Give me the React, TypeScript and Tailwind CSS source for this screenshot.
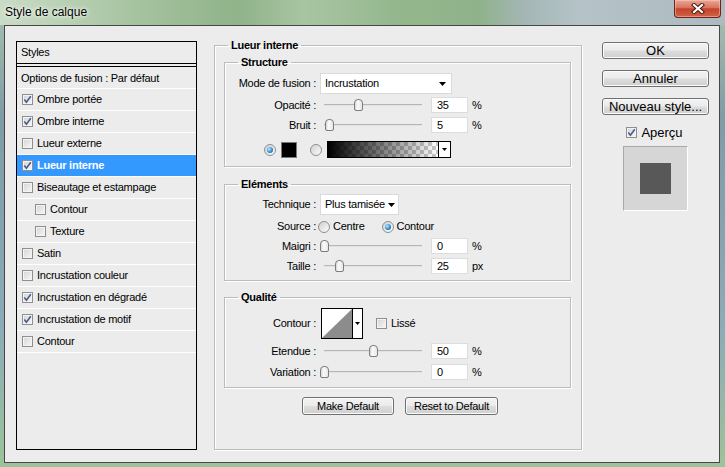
import type { ReactNode } from "react";

const STYLE_ROWS = [
  { label: "Ombre portée", on: true },
  { label: "Ombre interne", on: true },
  { label: "Lueur externe" },
  { label: "Lueur interne", on: true, active: true },
  { label: "Biseautage et estampage" },
  { label: "Contour", sub: true },
  { label: "Texture", sub: true },
  { label: "Satin" },
  { label: "Incrustation couleur" },
  { label: "Incrustation en dégradé", on: true },
  { label: "Incrustation de motif", on: true },
  { label: "Contour" },
];

function Check({ on }: { on?: boolean }) {
  return (
    <span className="flex h-[11px] w-[11px] shrink-0 items-center justify-center border border-[#8e8f8f] bg-[linear-gradient(135deg,#d4d4d4,#f7f7f7)] shadow-[inset_0_0_0_1px_#f4f4f4]">
      {on && (
        <svg width="9" height="9" viewBox="0 0 9 9">
          <path d="M1.3 4.6 L3.4 7.2 L7.8 1.3" fill="none" stroke="#4a5a8e" strokeWidth="1.6" />
        </svg>
      )}
    </span>
  );
}

function Radio({ on }: { on?: boolean }) {
  return (
    <span className="flex h-[12px] w-[12px] shrink-0 items-center justify-center rounded-full border border-[#8e8f8f] bg-[linear-gradient(135deg,#cfcfcf,#fdfdfd)]">
      {on && (
        <span className="h-[6px] w-[6px] rounded-full bg-[radial-gradient(circle_at_35%_35%,#bfeaff,#2e8fd6_55%,#0c4a84)]" />
      )}
    </span>
  );
}

function Arrow() {
  return (
    <svg width="7" height="4" viewBox="0 0 7 4" className="shrink-0">
      <path d="M0 0 H7 L3.5 4 Z" fill="#000" />
    </svg>
  );
}

function Select({ value, width }: { value: string; width: string }) {
  return (
    <div className={`flex h-[21px] items-center justify-between gap-[3px] whitespace-nowrap border border-[#dadada] bg-white pl-[4px] pr-[5px] ${width}`}>
      <span>{value}</span>
      <Arrow />
    </div>
  );
}

function Field({ label, children }: { label: string; children: ReactNode }) {
  return (
    <div className="flex items-center">
      <span className="w-[91px] shrink-0 text-right">{label}</span>
      <div className="ml-[4px] flex items-center">{children}</div>
    </div>
  );
}

function SliderField({ label, value, pos, unit = "%" }: { label: string; value: string; pos: number; unit?: string }) {
  return (
    <Field label={label}>
      <div className="relative h-[16px] w-[106px]">
        <div className="absolute left-[4px] right-[4px] top-[7px] h-[2px] border-t border-[#b6b6b6] bg-[#e2e2e2]" />
        <div
          className="absolute top-[2px] h-[12px] w-[9px] rounded-t-[4px] rounded-b-[2px] border border-[#7d7d7d] bg-[linear-gradient(90deg,#d9d9d9,#fbfbfb_40%,#e6e6e6)]"
          style={{ left: `${pos}px` }}
        />
      </div>
      <div className="ml-[5px] flex h-[16px] w-[37px] items-center border border-[#dcdcdc] bg-white pl-[5px]">{value}</div>
      <span className="ml-[4px]">{unit}</span>
    </Field>
  );
}

function Group({ title, className = "", children }: { title: string; className?: string; children: ReactNode }) {
  return (
    <fieldset className={`w-[347px] border border-[#bcbcbc] p-0 shadow-[inset_1px_1px_0_#fff,1px_1px_0_#fff] ${className}`}>
      <legend className="ml-[13px] px-[3px] font-bold leading-[13px]">{title}</legend>
      {children}
    </fieldset>
  );
}

function Button({ label, className = "" }: { label: string; className?: string }) {
  return (
    <div
      className={`flex items-center justify-center whitespace-nowrap rounded-[3px] border border-[#707070] bg-[linear-gradient(180deg,#f3f3f3_0%,#ebebeb_48%,#dddddd_52%,#cfcfcf_100%)] shadow-[inset_0_0_0_1px_#fbfbfb] ${className}`}
    >
      {label}
    </div>
  );
}

export default function App() {
  return (
    <div className="h-[467px] w-[725px] overflow-hidden bg-[linear-gradient(180deg,#a9c3ad_0%,#7f9ca6_25%,#8cabb8_70%,#9cc398_100%)] font-[family-name:'Liberation_Sans',Arial,sans-serif] text-[11px] leading-[13px] tracking-[-0.25px] text-black">
      {/* aero title bar */}
      <div className="flex h-[25px] items-start justify-between bg-[linear-gradient(90deg,#cadcc6_0%,#b6cfb1_10%,#a0bf9a_22%,#90b38a_33%,#a8c5a2_42%,#94b78e_55%,#8fb28a_66%,#a3b6b3_72%,#b5c3c8_80%,#adbbc1_100%)] pl-[5px] pr-[4px]">
        <span className="mt-[6px] text-[12px] tracking-normal [text-shadow:0_0_6px_#fff,0_0_3px_#fff]">Style de calque</span>
        <div className="flex h-[18px] w-[47px] items-center justify-center rounded-b-[4px] border border-t-0 border-[#6a241a] bg-[linear-gradient(180deg,#eaa898_0%,#d8735d_45%,#c5422a_52%,#cf6446_100%)] shadow-[inset_0_0_0_1px_rgba(255,215,205,0.45)]">
          <svg width="14" height="11" viewBox="0 0 14 11">
            <path d="M3 2 L11 9 M11 2 L3 9" stroke="#4a1a12" strokeWidth="4.2" strokeLinecap="square" />
            <path d="M3 2 L11 9 M11 2 L3 9" stroke="#fff" strokeWidth="2.2" strokeLinecap="square" />
          </svg>
        </div>
      </div>

      <div className="ml-[4px] flex h-[438px] w-[716px] items-start border border-[#474747] bg-[#ececec] pl-[11px]">
        {/* styles list */}
        <div className="mt-[15px] h-[409px] w-[181px] shrink-0 border border-black">
          <div className="flex h-[22px] items-center border-b border-black pl-[4px]">Styles</div>
          <div className="mt-[2px] flex h-[22px] items-center border-t border-black pl-[4px]">
            <span className="pt-[1px]">Options de fusion : Par défaut</span>
          </div>
          <div className="border-t border-white" />
          {STYLE_ROWS.map((row, i) => (
            <div
              key={i}
              className={`flex h-[22px] items-center border-b border-white ${row.sub ? "pl-[18px]" : "pl-[5px]"} ${
                row.active ? "bg-[#3399ff] font-bold text-white" : ""
              }`}
            >
              <Check on={row.on} />
              <span className="ml-[4px]">{row.label}</span>
            </div>
          ))}
        </div>

        {/* settings */}
        <fieldset className="ml-[17px] mt-[13px] h-[411px] w-[368px] shrink-0 border border-[#bcbcbc] p-0 shadow-[inset_1px_1px_0_#fff,1px_1px_0_#fff]">
          <legend className="ml-[13px] px-[3px] font-bold leading-[13px]">Lueur interne</legend>
          <div className="flex flex-col pl-[9px] pt-[4px]">
            <Group title="Structure">
              <div className="flex flex-col pb-[8px] pt-[4px]">
                <Field label="Mode de fusion :">
                  <Select value="Incrustation" width="w-[132px]" />
                </Field>
                <div className="mt-[3px]">
                  <SliderField label="Opacité :" value="35" pos={34} />
                </div>
                <div className="mt-[4px]">
                  <SliderField label="Bruit :" value="5" pos={5} />
                </div>
                <div className="mt-[8px] flex h-[17px] items-center pl-[39px]">
                  <Radio on />
                  <span className="ml-[5px] h-[16px] w-[16px] border border-[#7a7a7a] bg-black" />
                  <span className="ml-[13px]">
                    <Radio />
                  </span>
                  <div className="ml-[5px] flex h-[17px] w-[124px] border border-black bg-white">
                    <div className="h-full flex-1 border-r border-black bg-[image:linear-gradient(90deg,#000,rgba(0,0,0,0)),repeating-conic-gradient(#c9c9c9_0%_25%,#ffffff_0%_50%)] bg-[length:100%_100%,8px_8px]" />
                    <div className="flex w-[11px] items-center justify-center">
                      <svg width="5" height="3" viewBox="0 0 5 3">
                        <path d="M0 0 H5 L2.5 3 Z" fill="#000" />
                      </svg>
                    </div>
                  </div>
                </div>
              </div>
            </Group>

            <Group title="Eléments" className="mt-[11px]">
              <div className="flex flex-col pb-[6px] pt-[3px]">
                <Field label="Technique :">
                  <Select value="Plus tamisée" width="w-[79px]" />
                </Field>
                <div className="mt-[5px] flex h-[13px] items-center">
                  <span className="w-[91px] shrink-0 text-right">Source :</span>
                  <span className="ml-[2px]">
                    <Radio />
                  </span>
                  <span className="ml-[3px]">Centre</span>
                  <span className="ml-[17px]">
                    <Radio on />
                  </span>
                  <span className="ml-[3px]">Contour</span>
                </div>
                <div className="mt-[5px]">
                  <SliderField label="Maigri :" value="0" pos={0} />
                </div>
                <div className="mt-[4px]">
                  <SliderField label="Taille :" value="25" pos={15} unit="px" />
                </div>
              </div>
            </Group>

            <Group title="Qualité" className="mt-[10px]">
              <div className="flex flex-col pb-[7px] pt-[4px]">
                <Field label="Contour :">
                  <div className="ml-[1px] flex h-[31px] w-[42px] border border-black bg-white">
                    <svg className="h-full flex-1 border-r border-black" viewBox="0 0 30 29" preserveAspectRatio="none">
                      <polygon points="0,29 30,0 30,29" fill="#8c8c8c" />
                    </svg>
                    <div className="flex w-[9px] items-center justify-center">
                      <svg width="5" height="3" viewBox="0 0 5 3">
                        <path d="M0 0 H5 L2.5 3 Z" fill="#000" />
                      </svg>
                    </div>
                  </div>
                  <span className="ml-[13px]">
                    <Check />
                  </span>
                  <span className="ml-[4px]">Lissé</span>
                </Field>
                <div className="mt-[4px]">
                  <SliderField label="Etendue :" value="50" pos={49} />
                </div>
                <div className="mt-[5px]">
                  <SliderField label="Variation :" value="0" pos={0} />
                </div>
              </div>
            </Group>

            <div className="mt-[9px] flex justify-center gap-[11px] pl-[4px] pr-[9px]">
              <Button label="Make Default" className="h-[18px] w-[92px]" />
              <Button label="Reset to Default" className="h-[18px] w-[93px]" />
            </div>
          </div>
        </fieldset>

        {/* actions */}
        <div className="ml-[20px] mt-[16px] flex w-[107px] shrink-0 flex-col items-center text-[13px] tracking-normal">
          <Button
            label="OK"
            className="h-[17px] w-[107px] border-[#3c7fb1] shadow-[inset_0_0_0_1px_#7fdcfb]"
          />
          <Button label="Annuler" className="mt-[11px] h-[17px] w-[107px]" />
          <Button label="Nouveau style..." className="mt-[11px] h-[17px] w-[107px]" />
          <div className="mt-[11px] flex items-center pr-[2px]">
            <Check on />
            <span className="ml-[4px]">Aperçu</span>
          </div>
          <div className="mt-[7px] flex h-[65px] w-[65px] items-center justify-center border border-b-white border-l-[#a9a9a9] border-r-white border-t-[#a9a9a9] bg-[#d6d6d6]">
            <div className="h-[31px] w-[31px] bg-[#585858]" />
          </div>
        </div>
      </div>
    </div>
  );
}
